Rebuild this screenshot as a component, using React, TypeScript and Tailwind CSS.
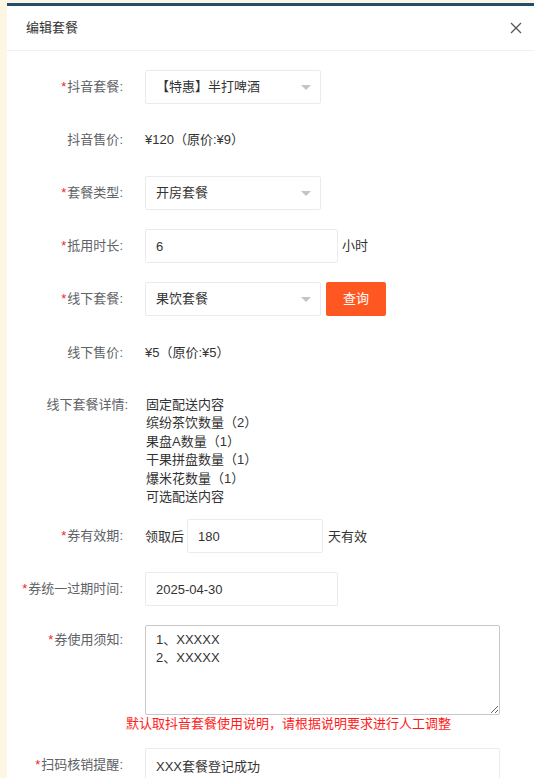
import React from "react";

const Star = () => <span className="text-[#f5222d] mr-[1px]">*</span>;

const Label = ({ required, text }: { required?: boolean; text: string }) => (
  <div className="w-[116px] shrink-0 text-right text-[#606266] leading-[34px]">
    {required && <Star />}
    {text}:
  </div>
);

const Caret = () => (
  <svg width="10" height="5" viewBox="0 0 10 5">
    <path d="M0 0 L10 0 L5 5 Z" fill="#c0c4cc" />
  </svg>
);

const Select = ({ value }: { value: string }) => (
  <div className="ml-[22px] w-[176px] h-[34px] border border-[#ebebeb] rounded-[2px] flex items-center justify-between pl-[10px] pr-[9px] text-[#333]">
    <span>{value}</span>
    <Caret />
  </div>
);

const App = () => {
  return (
    <div className="h-[778px] overflow-hidden bg-[#fdf6e3] pt-[3px] pl-[7px] text-[13px] font-['Liberation_Sans','Noto_Sans_CJK_SC',sans-serif]">
      <div className="h-full bg-white border-t-[3px] border-[#1f4e6e]">
        {/* header */}
        <div className="h-[45px] flex items-center justify-between pl-[19px] pr-[12px] border-b border-[#f0f0f0]">
          <span className="text-[#333]">编辑套餐</span>
          <svg width="12" height="12" viewBox="0 0 12 12">
            <path d="M1 1 L11 11 M11 1 L1 11" stroke="#555" strokeWidth="1.3" />
          </svg>
        </div>

        <div className="pt-[19px] flex flex-col">
          <div className="flex h-[34px] mb-[19px]">
            <Label required text="抖音套餐" />
            <Select value="【特惠】半打啤酒" />
          </div>

          <div className="flex h-[34px] mb-[19px]">
            <Label text="抖音售价" />
            <span className="ml-[22px] leading-[34px] text-[#333]">¥120（原价:¥9）</span>
          </div>

          <div className="flex h-[34px] mb-[19px]">
            <Label required text="套餐类型" />
            <Select value="开房套餐" />
          </div>

          <div className="flex h-[34px] mb-[19px] items-center">
            <Label required text="抵用时长" />
            <input
              defaultValue="6"
              className="ml-[22px] w-[193px] h-[34px] border border-[#ebebeb] rounded-[2px] px-[10px] text-[#333] outline-none"
            />
            <span className="ml-[4px] text-[#333]">小时</span>
          </div>

          <div className="flex h-[34px] mb-[20px]">
            <Label required text="线下套餐" />
            <Select value="果饮套餐" />
            <button className="ml-[5px] w-[60px] h-[34px] rounded-[2px] bg-[#ff5722] text-white">查询</button>
          </div>

          <div className="flex h-[34px] mb-[26px]">
            <Label text="线下售价" />
            <span className="ml-[22px] leading-[34px] text-[#333]">¥5（原价:¥5）</span>
          </div>

          <div className="flex mb-[13px] leading-[18.4px]">
            <div className="w-[121px] shrink-0 text-right text-[#606266]">线下套餐详情:</div>
            <div className="ml-[18px] flex flex-col text-[#333]">
              <span>固定配送内容</span>
              <span>缤纷茶饮数量（2）</span>
              <span>果盘A数量（1）</span>
              <span>干果拼盘数量（1）</span>
              <span>爆米花数量（1）</span>
              <span>可选配送内容</span>
            </div>
          </div>

          <div className="flex h-[34px] mb-[19px] items-center">
            <Label required text="券有效期" />
            <span className="ml-[22px] text-[#333]">领取后</span>
            <input
              defaultValue="180"
              className="ml-[3px] w-[136px] h-[34px] border border-[#ebebeb] rounded-[2px] px-[10px] text-[#333] outline-none"
            />
            <span className="ml-[5px] text-[#333]">天有效</span>
          </div>

          <div className="flex h-[34px] mb-[19px]">
            <Label required text="券统一过期时间" />
            <input
              defaultValue="2025-04-30"
              className="ml-[22px] w-[193px] h-[34px] border border-[#ebebeb] rounded-[2px] px-[10px] text-[#333] outline-none"
            />
          </div>

          <div className="flex">
            <div className="w-[116px] shrink-0 text-right text-[#606266] leading-[30px]">
              <Star />
              券使用须知:
            </div>
            <textarea
              defaultValue={"1、XXXXX\n2、XXXXX"}
              className="ml-[22px] w-[355px] h-[90px] border border-[#c8c8c8] rounded-[2px] px-[10px] pt-[5px] leading-[18px] text-[#333] outline-none"
            />
          </div>
          <div className="pl-[119px] leading-[18px] text-[#ff1a1a] mb-[15px]">
            默认取抖音套餐使用说明，请根据说明要求进行人工调整
          </div>

          <div className="flex h-[34px]">
            <Label required text="扫码核销提醒" />
            <input
              defaultValue="XXX套餐登记成功"
              className="ml-[22px] w-[355px] h-[34px] border border-[#ebebeb] rounded-[2px] px-[10px] text-[#333] outline-none"
            />
          </div>
        </div>
      </div>
    </div>
  );
};

export default App;
